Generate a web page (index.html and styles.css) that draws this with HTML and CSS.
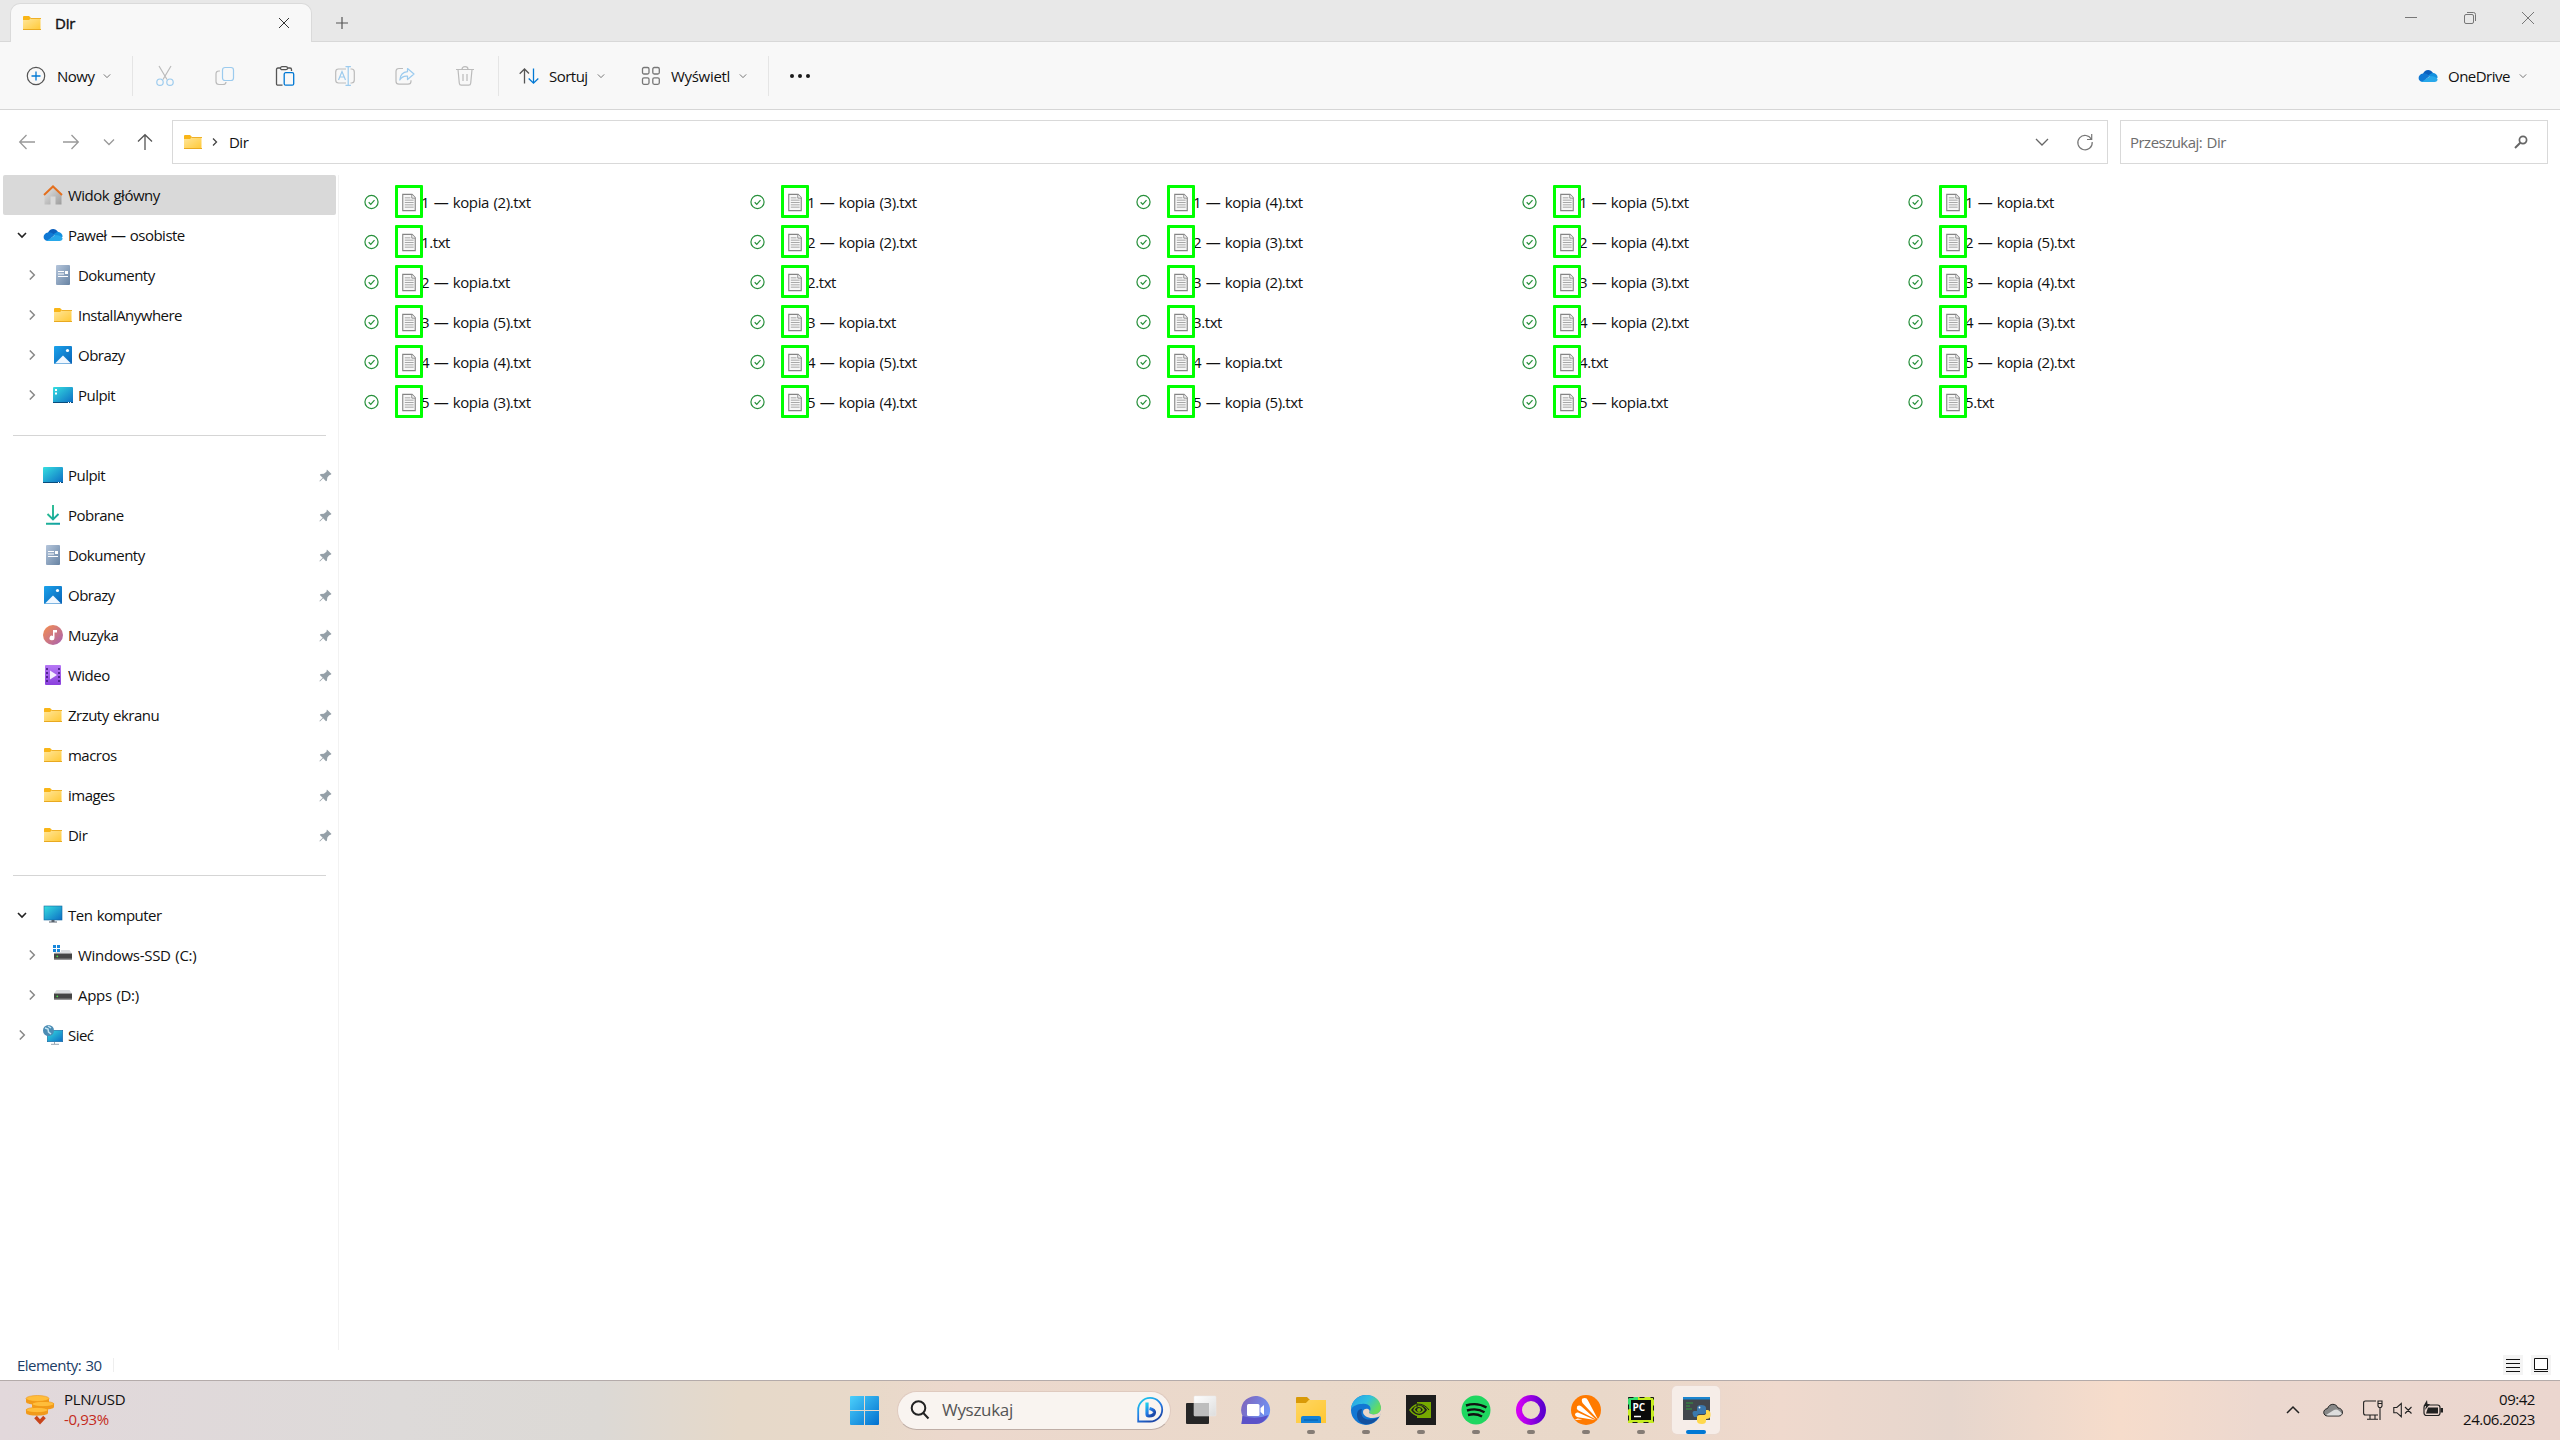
FILE: index.html
```html
<!DOCTYPE html>
<html lang="pl">
<head>
<meta charset="utf-8">
<title>Dir</title>
<link rel="stylesheet" href="styles.css">
</head>
<body>
<svg class="sprite" width="0" height="0" aria-hidden="true">
  <defs>
    <linearGradient id="gFolder" x1="0" y1="0" x2="1" y2="1"><stop offset="0" stop-color="#ffe69a"/><stop offset="1" stop-color="#ffc937"/></linearGradient>
    <linearGradient id="gScreen" x1="0" y1="0" x2="1" y2="1"><stop offset="0" stop-color="#36dfe0"/><stop offset="1" stop-color="#0c6cc4"/></linearGradient>
    <linearGradient id="gPic" x1="0" y1="0" x2="1" y2="1"><stop offset="0" stop-color="#1ba3ec"/><stop offset="1" stop-color="#0862b6"/></linearGradient>
    <linearGradient id="gDoc" x1="0" y1="0" x2="1" y2="1"><stop offset="0" stop-color="#b5c6dc"/><stop offset="1" stop-color="#6783a3"/></linearGradient>
    <linearGradient id="gMusic" x1="0" y1="0" x2="1" y2="1"><stop offset="0" stop-color="#f78f4c"/><stop offset="1" stop-color="#a660b4"/></linearGradient>
    <linearGradient id="gVideo" x1="0" y1="0" x2="0" y2="1"><stop offset="0" stop-color="#b678f5"/><stop offset="1" stop-color="#8a40dd"/></linearGradient>
    <linearGradient id="gHome" x1="0" y1="0" x2="1" y2="1"><stop offset="0" stop-color="#e6e6e6"/><stop offset="1" stop-color="#9c9c9c"/></linearGradient>
    <linearGradient id="gDown" x1="0" y1="0" x2="1" y2="1"><stop offset="0" stop-color="#2fc489"/><stop offset="1" stop-color="#0f9fa5"/></linearGradient>
    <linearGradient id="gWin" x1="0" y1="0" x2="1" y2="1"><stop offset="0" stop-color="#4cd0fb"/><stop offset="1" stop-color="#006fcf"/></linearGradient>
    <symbol id="folder" viewBox="0 0 20 20"><path d="M1 4q0-1 1-1h5l2 2-2 3H1z" fill="#f9b517"/><path d="M1 7h6l2-1.600h9.500v11H1z" fill="url(#gFolder)"/><path d="M8.500 5.500H19" stroke="#eeb028"/><path d="M1 16.500h18" stroke="#e9a91f"/></symbol>
    <symbol id="cloud" viewBox="0 0 20 20"><path d="M5 8C6.500 3 12.500 2.500 15 7l-6 5z" fill="#0a5fbd"/><path d="M4.500 16C-1 15.500-.5 8 5 7.400c2-.4 4 .3 6 2L6 16z" fill="#0f78d4"/><path d="M10 9.500l4.500-2.700c3 .2 5 2 5.200 5l-5 1z" fill="#1490df"/><path d="M3.500 16l8-5.500c3-1 8 1 8 3 0 1.500-1 2.500-3 2.500z" fill="#28a8ea"/></symbol>
    <symbol id="home" viewBox="0 0 20 20"><path d="M1.500 10L10 2l8.500 8v9.500h-6v-8h-5v8h-6z" fill="url(#gHome)"/><path d="M1 10l9-8.500L19 10" fill="none" stroke="#e4701e" stroke-width="2"/></symbol>
    <symbol id="document" viewBox="0 0 20 20"><rect x="3" width="14" height="20" rx="1" fill="url(#gDoc)"/><path d="M5 6.500h6M5 9h6M5 11.500h10" stroke="#fff" stroke-width="1.100"/><path d="M12 6h3v3h-3z" fill="#fff"/></symbol>
    <symbol id="picture" viewBox="0 0 20 20"><rect x="1" y="1" width="18" height="18" rx="1" fill="url(#gPic)"/><path d="M2 18.500l8-8 8 8z" fill="#eff7ff"/><circle cx="14.500" cy="5.500" r="1.600" fill="#fff"/></symbol>
    <symbol id="desk" viewBox="0 0 20 20"><rect y="2" width="20" height="16" rx="1" fill="url(#gScreen)"/><path d="M0 17.500h20" stroke="#094c7c"/><path d="M15 17.500h1m1 0h1" stroke="#fff"/></symbol>
    <symbol id="deskdots" viewBox="0 0 20 20"><use href="#desk"/><path d="M2 4h2v2H2zm0 3.500h2v2H2z" fill="#fff"/></symbol>
    <symbol id="download" viewBox="0 0 20 20"><path d="M10 0v14M4.500 9l5.500 5.500L15.500 9M3 18.700h14" fill="none" stroke="url(#gDown)" stroke-width="1.900"/></symbol>
    <symbol id="music" viewBox="0 0 20 20"><circle cx="10" cy="10" r="10" fill="url(#gMusic)"/><path d="M10 5h4v2.500h-2.500V13A2.500 2.300 0 1 1 10 10.900z" fill="#fff"/></symbol>
    <symbol id="video" viewBox="0 0 20 20"><rect x="2" width="16" height="20" rx="1" fill="url(#gVideo)"/><path d="M4 3v15M16 3v15" stroke="#49208a" stroke-width="1.800" stroke-dasharray="2 2"/><path d="M7 5.500v9l7-4.500z" fill="#f4edff"/></symbol>
    <symbol id="pc" viewBox="0 0 20 20"><rect x="1" y="1" width="18" height="14" fill="url(#gScreen)" stroke="#13679f" stroke-width=".6"/><path d="M8.500 15h3v1.500h2.500v1H6v-1h2.500z" fill="#56616d"/></symbol>
    <symbol id="drive" viewBox="0 0 20 20"><path d="M3.500 5h13L19 8.500H1z" fill="#dcdee0"/><path d="M1 8.500h18v6H1z" fill="#454545"/><path d="M1 14h18" stroke="#888"/><circle cx="4.300" cy="11.300" r=".9" fill="#50e04c"/></symbol>
    <symbol id="windrive" viewBox="0 0 20 20"><use href="#drive"/><path d="M-.5-1h8.500v8H-.5z" fill="#fff"/><path d="M0 0h3v3H0zm4 0h3v3H4zM0 4h3v3H0zm4 0h3v3H4z" fill="#1787dc"/></symbol>
    <symbol id="network" viewBox="0 0 20 20"><rect x="4.300" y="5.300" width="15.400" height="11.400" fill="url(#gScreen)" stroke="#1668a4" stroke-width=".6"/><path d="M11.500 17v2M8 19.300h8" stroke="#98a6b2"/><circle cx="5.500" cy="5.500" r="5.500" fill="#4b8cb4"/><path d="M2 3l3 1 .5 3L8 9M5 1l3 2" stroke="#c4e6f4" stroke-width="1.500" fill="none"/></symbol>
    <symbol id="pin" viewBox="0 0 14 14"><path d="M8.500.5l5 5-1.500 1-1 .1-2 2.500-.5 3.500-1 .6-3-3.200L1 13.500l-.6-.6L4 9.300.9 6.500l.8-1 3.500-.3L8 3z" fill="#95a0a8"/></symbol>
    <symbol id="chev" viewBox="0 0 10 10"><path d="M1 3l4 4 4-4" fill="none" stroke="currentColor" stroke-width="var(--w,1)"/></symbol>
    <symbol id="chevr" viewBox="0 0 10 10"><path d="M2.800.5L7.300 5 2.800 9.500" fill="none" stroke="currentColor" stroke-width="var(--w,1.500)"/></symbol>
    <symbol id="ok" viewBox="0 0 16 16"><circle cx="8" cy="8" r="7" fill="#fff" stroke="#27903b" stroke-width="1.300"/><path d="M5 8.300l2.200 2.200L11.200 6" fill="none" stroke="#27903b" stroke-width="1.300"/></symbol>
    <symbol id="txt" viewBox="0 0 15 19"><path d="M.8.8h10l3.400 3.700v13.700H.8z" fill="#f7f7f7" stroke="#858585" stroke-width="1.200"/><path d="M10.500 1v3.800h3.700" fill="#fff" stroke="#858585"/><path d="M3 4.500h6M3 7h9.500M3 9.500h9.500M3 12h9.500M3 14.500h9.500" stroke="#a0a0a0"/></symbol>
  </defs>
</svg>

<header class="titlebar">
  <div class="tab"><svg class="i20"><use href="#folder"/></svg><span class="tab-name">Dir</span><svg class="tab-close" viewBox="0 0 12 12"><path d="M1 1l10 10M11 1L1 11" stroke="#333"/></svg></div>
  <svg class="tab-new" viewBox="0 0 12 12"><path d="M6 0v12M0 6h12" stroke="#555" stroke-width="1.200"/></svg>
  <div class="win-buttons">
    <svg viewBox="0 0 12 12"><path d="M0 5.500h12" stroke="#777"/></svg>
    <svg viewBox="0 0 12 12" fill="none" stroke="#777"><rect x=".5" y="2.500" width="9" height="9" rx="1.500"/><path d="M3 .5h6.500q2 0 2 2V9"/></svg>
    <svg viewBox="0 0 12 12"><path d="M0 0l12 12M12 0L0 12" stroke="#777"/></svg>
  </div>
</header>

<nav class="toolbar">
  <div class="tool new"><svg class="i20" viewBox="0 0 20 20" fill="none"><circle cx="10" cy="10" r="8.700" stroke="#555" stroke-width="1.200"/><path d="M10 5.500v9M5.500 10h9" stroke="#0078d4" stroke-width="1.300"/></svg><span>Nowy</span><svg class="i8"><use href="#chev"/></svg></div>
  <div class="divider"></div>
  <div class="icons">
    <svg class="i20" viewBox="0 0 20 20" fill="none" stroke-width="1.200"><path d="M4 0l8 13.500M16 0L8 13.500" stroke="#bbb"/><circle cx="5" cy="16.200" r="3.200" stroke="#9ccbee"/><circle cx="15" cy="16.200" r="3.200" stroke="#9ccbee"/></svg>
    <svg class="i20" viewBox="0 0 20 20" fill="none" stroke-width="1.200"><path d="M5 5H4Q1 5 1 8v7.500q0 3 3 3h4q3 0 3-2.500" stroke="#bbb"/><rect x="7.500" y="1.500" width="11" height="13" rx="2.500" stroke="#9ccbee"/></svg>
    <svg class="i20" viewBox="0 0 20 20" fill="none" stroke-width="1.300"><path d="M7.500 19.200H3q-1.500 0-1.500-1.500V3.500Q1.500 2 3 2h2.500M12.500 2H15q1.500 0 1.500 1.500V5" stroke="#555"/><rect x="5.500" y=".7" width="7" height="3" rx="1.500" stroke="#555"/><rect x="9.200" y="6.700" width="9.500" height="12.500" rx="1.500" stroke="#0078d4"/></svg>
    <svg class="i20" viewBox="0 0 20 20" fill="none" stroke-width="1.200"><path d="M11 3H3.500Q.7 3 .7 6v8q0 3 2.800 3H11M15.500 3h1q2.800 0 2.800 3v8q0 3-2.800 3h-1" stroke="#bbb"/><path d="M3.500 14L7 5.500l3.500 8.500M4.700 11h4.600M13.200 1v18M10.500.7h5.400M10.500 19.300h5.400" stroke="#9ccbee"/></svg>
    <svg class="i20" viewBox="0 0 20 20" fill="none" stroke-width="1.200"><path d="M8 2.500H4Q1 2.500 1 5.500v9.700q0 3 3 3h9q3 0 3-3v-1" stroke="#bbb"/><path d="M12.500 2.500L19 8l-6.500 5.500v-3.300Q7.500 9.500 4.800 14 5.500 6.300 12.500 5.700z" stroke="#9ccbee" stroke-linejoin="round"/></svg>
    <svg class="i20" viewBox="0 0 20 20" fill="none" stroke="#bbb" stroke-width="1.200"><path d="M1 3.500h18M3 3.500l1.300 13.700q.2 2 2 2h7.400q1.800 0 2-2L17 3.500M7 3.300q0-2.600 3-2.600t3 2.600M8 8v7M12 8v7"/></svg>
  </div>
  <div class="divider"></div>
  <div class="tool sort"><svg class="i20" viewBox="0 0 20 20" fill="none" stroke-width="1.300"><path d="M5.500 17.500V3M.7 7.700L5.500 3 10 7.500" stroke="#555"/><path d="M14.500 2.500V17M9.700 12.500l4.800 4.700 4.800-4.700" stroke="#0078d4"/></svg><span>Sortuj</span><svg class="i8"><use href="#chev"/></svg></div>
  <div class="tool view"><svg class="i20" viewBox="0 0 20 20" fill="none" stroke="#777" stroke-width="1.300"><rect x="1.500" y="1.500" width="6.500" height="6.500" rx="1.500"/><rect x="11.800" y="1.500" width="6.500" height="6.500" rx="1.500"/><rect x="1.500" y="11.800" width="6.500" height="6.500" rx="1.500"/><rect x="11.800" y="11.800" width="6.500" height="6.500" rx="1.500"/></svg><span>Wyświetl</span><svg class="i8"><use href="#chev"/></svg></div>
  <div class="divider"></div>
  <svg class="more" viewBox="0 0 20 6" fill="#1b1b1b"><circle cx="2" cy="3" r="2"/><circle cx="10" cy="3" r="2"/><circle cx="18" cy="3" r="2"/></svg>
  <div class="tool onedrive"><svg class="i20"><use href="#cloud"/></svg><span>OneDrive</span><svg class="i8"><use href="#chev"/></svg></div>
</nav>

<div class="location">
  <div class="arrows">
    <svg viewBox="0 0 16 16" stroke="#999"><path d="M16 8H1M7.500 1L.7 8l6.800 7"/></svg>
    <svg viewBox="0 0 16 16" stroke="#999"><path d="M0 8h15M8.500 1l6.800 7-6.800 7"/></svg>
    <svg viewBox="0 0 16 16" stroke="#999"><path d="M3 5.500l5 5 5-5"/></svg>
    <svg viewBox="0 0 16 16" stroke="#555"><path d="M8 16V1M1 7.500L8 .7l7 6.800"/></svg>
  </div>
  <div class="address"><svg class="i20"><use href="#folder"/></svg><svg class="crumb" viewBox="0 0 8 8"><path d="M2 .5L5.500 4 2 7.500" fill="none" stroke="#444" stroke-width="1.300"/></svg><span>Dir</span>
    <svg class="expand" viewBox="0 0 14 14" fill="none" stroke="#666" stroke-width="1.300"><path d="M1 4l6 6 6-6"/></svg>
    <svg class="reload" viewBox="0 0 16 16" fill="none" stroke="#777" stroke-width="1.200"><path d="M14.500 5.500A7.200 7.200 0 1 0 15.200 8M14.700 0v5.500H10"/></svg></div>
  <div class="search"><span>Przeszukaj: Dir</span><svg viewBox="0 0 14 14" fill="none" stroke="#666"><circle cx="9" cy="5" r="3.600" stroke-width="1.700"/><path d="M6.300 7.800L1 13" stroke-width="2"/></svg></div>
</div>

<div class="content">
  <aside class="sidebar">
    <div class="row selected"><i></i><svg class="i20"><use href="#home"/></svg>Widok główny</div>
    <div class="row open"><svg class="tw"><use href="#chev"/></svg><svg class="i20"><use href="#cloud"/></svg>Paweł — osobiste</div>
    <div class="row sub"><svg class="tw"><use href="#chevr"/></svg><svg class="i20"><use href="#document"/></svg>Dokumenty</div>
    <div class="row sub"><svg class="tw"><use href="#chevr"/></svg><svg class="i20"><use href="#folder"/></svg>InstallAnywhere</div>
    <div class="row sub"><svg class="tw"><use href="#chevr"/></svg><svg class="i20"><use href="#picture"/></svg>Obrazy</div>
    <div class="row sub"><svg class="tw"><use href="#chevr"/></svg><svg class="i20"><use href="#deskdots"/></svg>Pulpit</div>
    <hr>
    <div class="row"><i></i><svg class="i20"><use href="#desk"/></svg>Pulpit<svg class="pin"><use href="#pin"/></svg></div>
    <div class="row"><i></i><svg class="i20"><use href="#download"/></svg>Pobrane<svg class="pin"><use href="#pin"/></svg></div>
    <div class="row"><i></i><svg class="i20"><use href="#document"/></svg>Dokumenty<svg class="pin"><use href="#pin"/></svg></div>
    <div class="row"><i></i><svg class="i20"><use href="#picture"/></svg>Obrazy<svg class="pin"><use href="#pin"/></svg></div>
    <div class="row"><i></i><svg class="i20"><use href="#music"/></svg>Muzyka<svg class="pin"><use href="#pin"/></svg></div>
    <div class="row"><i></i><svg class="i20"><use href="#video"/></svg>Wideo<svg class="pin"><use href="#pin"/></svg></div>
    <div class="row"><i></i><svg class="i20"><use href="#folder"/></svg>Zrzuty ekranu<svg class="pin"><use href="#pin"/></svg></div>
    <div class="row"><i></i><svg class="i20"><use href="#folder"/></svg>macros<svg class="pin"><use href="#pin"/></svg></div>
    <div class="row"><i></i><svg class="i20"><use href="#folder"/></svg>images<svg class="pin"><use href="#pin"/></svg></div>
    <div class="row"><i></i><svg class="i20"><use href="#folder"/></svg>Dir<svg class="pin"><use href="#pin"/></svg></div>
    <hr>
    <div class="row open"><svg class="tw"><use href="#chev"/></svg><svg class="i20"><use href="#pc"/></svg>Ten komputer</div>
    <div class="row sub wide"><svg class="tw"><use href="#chevr"/></svg><svg class="i20"><use href="#windrive"/></svg>Windows-SSD (C:)</div>
    <div class="row sub wide"><svg class="tw"><use href="#chevr"/></svg><svg class="i20"><use href="#drive"/></svg>Apps (D:)</div>
    <div class="row"><svg class="tw"><use href="#chevr"/></svg><svg class="i20"><use href="#network"/></svg>Sieć</div>
  </aside>

  <main class="files">
    <div class="file"><svg class="ok"><use href="#ok"/></svg><b><svg><use href="#txt"/></svg></b><span>1 — kopia (2).txt</span></div>
    <div class="file"><svg class="ok"><use href="#ok"/></svg><b><svg><use href="#txt"/></svg></b><span>1 — kopia (3).txt</span></div>
    <div class="file"><svg class="ok"><use href="#ok"/></svg><b><svg><use href="#txt"/></svg></b><span>1 — kopia (4).txt</span></div>
    <div class="file"><svg class="ok"><use href="#ok"/></svg><b><svg><use href="#txt"/></svg></b><span>1 — kopia (5).txt</span></div>
    <div class="file"><svg class="ok"><use href="#ok"/></svg><b><svg><use href="#txt"/></svg></b><span>1 — kopia.txt</span></div>
    <div class="file"><svg class="ok"><use href="#ok"/></svg><b><svg><use href="#txt"/></svg></b><span>1.txt</span></div>
    <div class="file"><svg class="ok"><use href="#ok"/></svg><b><svg><use href="#txt"/></svg></b><span>2 — kopia (2).txt</span></div>
    <div class="file"><svg class="ok"><use href="#ok"/></svg><b><svg><use href="#txt"/></svg></b><span>2 — kopia (3).txt</span></div>
    <div class="file"><svg class="ok"><use href="#ok"/></svg><b><svg><use href="#txt"/></svg></b><span>2 — kopia (4).txt</span></div>
    <div class="file"><svg class="ok"><use href="#ok"/></svg><b><svg><use href="#txt"/></svg></b><span>2 — kopia (5).txt</span></div>
    <div class="file"><svg class="ok"><use href="#ok"/></svg><b><svg><use href="#txt"/></svg></b><span>2 — kopia.txt</span></div>
    <div class="file"><svg class="ok"><use href="#ok"/></svg><b><svg><use href="#txt"/></svg></b><span>2.txt</span></div>
    <div class="file"><svg class="ok"><use href="#ok"/></svg><b><svg><use href="#txt"/></svg></b><span>3 — kopia (2).txt</span></div>
    <div class="file"><svg class="ok"><use href="#ok"/></svg><b><svg><use href="#txt"/></svg></b><span>3 — kopia (3).txt</span></div>
    <div class="file"><svg class="ok"><use href="#ok"/></svg><b><svg><use href="#txt"/></svg></b><span>3 — kopia (4).txt</span></div>
    <div class="file"><svg class="ok"><use href="#ok"/></svg><b><svg><use href="#txt"/></svg></b><span>3 — kopia (5).txt</span></div>
    <div class="file"><svg class="ok"><use href="#ok"/></svg><b><svg><use href="#txt"/></svg></b><span>3 — kopia.txt</span></div>
    <div class="file"><svg class="ok"><use href="#ok"/></svg><b><svg><use href="#txt"/></svg></b><span>3.txt</span></div>
    <div class="file"><svg class="ok"><use href="#ok"/></svg><b><svg><use href="#txt"/></svg></b><span>4 — kopia (2).txt</span></div>
    <div class="file"><svg class="ok"><use href="#ok"/></svg><b><svg><use href="#txt"/></svg></b><span>4 — kopia (3).txt</span></div>
    <div class="file"><svg class="ok"><use href="#ok"/></svg><b><svg><use href="#txt"/></svg></b><span>4 — kopia (4).txt</span></div>
    <div class="file"><svg class="ok"><use href="#ok"/></svg><b><svg><use href="#txt"/></svg></b><span>4 — kopia (5).txt</span></div>
    <div class="file"><svg class="ok"><use href="#ok"/></svg><b><svg><use href="#txt"/></svg></b><span>4 — kopia.txt</span></div>
    <div class="file"><svg class="ok"><use href="#ok"/></svg><b><svg><use href="#txt"/></svg></b><span>4.txt</span></div>
    <div class="file"><svg class="ok"><use href="#ok"/></svg><b><svg><use href="#txt"/></svg></b><span>5 — kopia (2).txt</span></div>
    <div class="file"><svg class="ok"><use href="#ok"/></svg><b><svg><use href="#txt"/></svg></b><span>5 — kopia (3).txt</span></div>
    <div class="file"><svg class="ok"><use href="#ok"/></svg><b><svg><use href="#txt"/></svg></b><span>5 — kopia (4).txt</span></div>
    <div class="file"><svg class="ok"><use href="#ok"/></svg><b><svg><use href="#txt"/></svg></b><span>5 — kopia (5).txt</span></div>
    <div class="file"><svg class="ok"><use href="#ok"/></svg><b><svg><use href="#txt"/></svg></b><span>5 — kopia.txt</span></div>
    <div class="file"><svg class="ok"><use href="#ok"/></svg><b><svg><use href="#txt"/></svg></b><span>5.txt</span></div>
  </main>
</div>

<footer class="status">
  <span class="count">Elementy: 30</span>
  <div class="modes">
    <svg viewBox="0 0 20 20"><path d="M3 4.500h14M3 8.500h14M3 12.500h14M3 16.500h14" stroke="#111"/></svg>
    <svg viewBox="0 0 20 20"><path d="M3.500 3.500h13v11h-13z" fill="#fff" stroke="#111"/><path d="M3 16.500h14" stroke="#111"/></svg>
  </div>
</footer>

<div class="taskbar">
  <div class="widget">
    <svg width="28" height="30" viewBox="0 0 28 30"><g fill="#f19a1c"><path d="M0 14.500v3.500c0 3.500 22 3.500 22 0v-3.500z"/><path d="M6 8.500V12c0 3.500 22 3.500 22 0V8.500z"/><path d="M0 3.500V7c0 3.500 23 3.500 23 0V3.500z"/></g><g fill="#ffbd3b" stroke="#ee930f" stroke-width=".6"><ellipse cx="11" cy="15" rx="11" ry="2.600"/><ellipse cx="17" cy="9" rx="11" ry="2.600"/><ellipse cx="11.500" cy="3.500" rx="11.500" ry="3"/></g><path d="M9.500 22l4.500 5 4.500-5" fill="none" stroke="#c8441b" stroke-width="3.500"/></svg>
    <div class="rate"><span>PLN/USD</span><span class="drop">-0,93%</span></div>
  </div>
  <div class="apps">
    <svg class="start" viewBox="0 0 29 29" fill="url(#gWin)"><path d="M0 1q0-1 1-1h13v14H0zM15 0h13q1 0 1 1v13H15zM0 15h14v14H1q-1 0-1-1zM15 15h14v13q0 1-1 1H15z"/></svg>
    <div class="find"><svg width="20" height="20" viewBox="0 0 20 20" fill="none" stroke="#222" stroke-width="2"><circle cx="8.500" cy="8" r="6.800"/><path d="M13.300 13l5.200 5.500"/></svg><span>Wyszukaj</span>
      <svg width="26" height="26" viewBox="0 0 26 26" fill="none"><defs><linearGradient id="gBing" x1="0" y1="0" x2=".6" y2="1"><stop offset="0" stop-color="#1bd5ee"/><stop offset=".6" stop-color="#2479e4"/><stop offset="1" stop-color="#1c48a8"/></linearGradient></defs><path d="M1.200 24.500V13A12 11.800 0 1 1 13 24.500z" stroke="url(#gBing)" stroke-width="1.800"/><path d="M10 5.500v11.500q0 2 2 2 5 0 5.500-3.500.3-2.500-5-4" stroke="url(#gBing)" stroke-width="3.200"/></svg></div>
    <div class="app"><svg viewBox="0 0 30 30"><defs><linearGradient id="gTask" x1="0" y1="0" x2="1" y2="1"><stop offset="0" stop-color="#fff"/><stop offset="1" stop-color="#ddd"/></linearGradient></defs><rect y="8" width="23" height="21" rx="1" fill="#262626"/><rect x="8" y="1" width="22" height="20" rx="1" fill="url(#gTask)" stroke="#e8e8e8" stroke-width=".5"/><path d="M8 8h15v13H8z" fill="#bdbdbd"/></svg></div>
    <div class="app"><svg viewBox="0 0 30 30"><defs><linearGradient id="gChat" x1="0" y1="0" x2="1" y2=".5"><stop offset="0" stop-color="#8060b8"/><stop offset="1" stop-color="#7094f4"/></linearGradient></defs><path d="M.5 29l1-8A14.500 14 0 1 1 15 29z" fill="url(#gChat)"/><path d="M.5 29l1-8q14 4 26-1Q23 29 15 29z" fill="#5b52c8"/><rect x="6" y="9" width="12.500" height="12" rx="1.500" fill="#fff"/><path d="M19.500 13l3.500-3v10l-3.500-3z" fill="#fff"/></svg></div>
    <div class="app run"><svg viewBox="0 0 30 30"><path d="M0 3q0-1 1-1h10l3 3-3 5H0z" fill="#d99a07"/><path d="M0 8h10l3-3h17v23H0z" fill="url(#gFolder)"/><path d="M0 8h10l3-3h17v23H0z" fill="#ffc62b" opacity=".5"/><path d="M5 28v-5q0-2 2-2h16q2 0 2 2v5z" fill="#1381d8"/><path d="M8 25h14" stroke="#075aa5"/></svg></div>
    <div class="app run"><svg viewBox="0 0 30 30"><defs><linearGradient id="gEdge" x1="0" y1="0" x2="1" y2=".5"><stop offset="0" stop-color="#279ee8"/><stop offset=".55" stop-color="#2fc0df"/><stop offset="1" stop-color="#67dd59"/></linearGradient></defs><circle cx="15" cy="15" r="15" fill="#1277d3"/><path d="M0 14C1-4 29-5 30 13c0 6-8 8-12 5 4-5 0-10-7-9-5 0-9 2-11 5z" fill="url(#gEdge)"/><path d="M11 14c-3 9 5 14 17 8-7 11-22 9-22-2 0-4 2-6 5-6z" fill="#13519f"/><path d="M18 18c4 3 12 1 12-5 1 6-1 9-3 9-8 3-15-1-15-5 0-5 9-4 6 1z" fill="#ead7c9"/></svg></div>
    <div class="app run"><svg viewBox="0 0 30 30"><path d="M0 0h30v30H0z" fill="#1d1d1d"/><path d="M11 7h14v16H11z" fill="#76a900"/><path d="M4 15c6-8 14-7 18 0-5 8-13 7-18 0z" fill="#1d1d1d" stroke="#76a900" stroke-width="1.500"/><path d="M8 15c2-5 7-5 10 0-3 4-7 4-10 0z" fill="none" stroke="#76a900" stroke-width="1.500"/><circle cx="13" cy="15" r="2" fill="#76a900"/><path d="M11 12V9q8 0 12 6" fill="none" stroke="#1d1d1d"/></svg></div>
    <div class="app run"><svg viewBox="0 0 30 30"><circle cx="15" cy="15" r="14.500" fill="#1fd760"/><path d="M5 10.500q11-3.500 20.500 2M6 15.500q10-3 17.500 1.700M7 20q8-2 14 1.500" fill="none" stroke="#111" stroke-width="2.400"/></svg></div>
    <div class="app run"><svg viewBox="0 0 30 30"><defs><linearGradient id="gOpera"><stop offset="0" stop-color="#d300f4"/><stop offset="1" stop-color="#5c00cf"/></linearGradient></defs><circle cx="15" cy="15" r="12" fill="none" stroke="url(#gOpera)" stroke-width="6"/></svg></div>
    <div class="app run"><svg viewBox="0 0 30 30"><circle cx="15" cy="15" r="15" fill="#ff7a00"/><path d="M11.500 3.500q4-1.500 5.500 2L27 24.500 11.500 8q-1.500-3 0-4.500zM6 11.500q2-2 4.500 0L25 24.500 7.500 15.500Q5 13.500 6 11.500zM4 19q1-2 3-1.500l17 7.500-17-2.700Q4 21.500 4 19z" fill="#fff"/><path d="M3.500 25l3-1.500 5 1z" fill="#fff"/></svg></div>
    <div class="app run"><svg viewBox="0 0 30 30"><path d="M2 2h26v26H2z" fill="#c6ec22"/><path d="M2 2h10v12H2z" fill="#36e06e"/><path d="M2.500 2.500h25v25h-25z" fill="none" stroke="#171717" stroke-dasharray="5 6"/><path d="M5 5h20v20H5z" fill="#0a0a0a"/><text x="6.500" y="15.500" class="pc-label">PC</text><path d="M8 21.500h7" stroke="#fff" stroke-width="1.500"/></svg></div>
    <div class="app run active"><svg viewBox="0 0 30 30"><path d="M2 2h27v23H2z" fill="#42474d"/><path d="M2 2h27v2.500H2z" fill="#1b85cf"/><path d="M5 8h7M5 11h4M5 14h6" stroke="#388043" stroke-width="1.300"/><path d="M16 17v-4q0-3 4-3 5 0 5 3v4q0 2-3 2h-4q-2 0-2 3h-3q-3-5 0-6h8" fill="#3a78ad"/><path d="M25 15h2q3 1 2.500 6-.5 3-4.500 3v2q0 3-4 3-5 0-5-3v-4q0-2 3-2h3q3 0 3-2z" fill="#ffd84c"/><circle cx="18.500" cy="12.500" r=".9" fill="#fff"/></svg></div>
  </div>
  <div class="tray">
    <svg class="caret" viewBox="0 0 14 8" fill="none" stroke="#222" stroke-width="1.500"><path d="M1 7l6-6 6 6"/></svg>
    <svg viewBox="0 0 20 20" stroke="#222"><path d="M4.500 16C0 16-1 9.500 4.500 8.500 6.500 3 13 3 15 8c6 .5 5.500 8 1 8z" fill="#888"/><path d="M3 15l8-5q4-2 8 4l-3 1.500H5z" fill="#ddd" stroke="none"/></svg>
    <svg class="net" viewBox="0 0 20 20" fill="none" stroke="#222" stroke-width="1.100"><path d="M13 1H2.500Q.6 1 .6 3v10q0 2 1.900 2H15M7 15v4M12 15v4M4 19.300h11M15 1h4v5l-1 1.500h-2L15 6zM17 7.500V20M15 3.500h4"/></svg>
    <svg class="vol" viewBox="0 0 20 20" fill="none" stroke="#222" stroke-width="1.100"><path d="M.8 7.500h3L8.300 3.500v13.200l-4.500-4h-3zM12 7l6.500 6.500M18.500 7L12 13.500"/></svg>
    <svg viewBox="0 0 20 20" fill="none"><rect x="1" y="5" width="16" height="10.500" rx="2.500" stroke="#222" stroke-width="1.200"/><path d="M3 13.500l2-6h10v6zM17.500 8H20v4.500h-2.500zM4 0L.5 6H3L2 10l5-6H4.500z" fill="#222"/></svg>
    <div class="clock"><span>09:42</span><span>24.06.2023</span></div>
  </div>
</div>
</body>
</html>
```
FILE: styles.css
```css
* { box-sizing: border-box; }

body {
  margin: 0;
  width: 2560px;
  height: 1440px;
  display: flex;
  flex-direction: column;
  overflow: hidden;
  background: #fff;
  color: #111;
  font: 15px/20px "Open Sans", "Noto Sans", sans-serif;
  letter-spacing: -0.52px;
  word-spacing: 1px;
}

svg { display: block; flex: none; overflow: visible; }
.sprite { position: absolute; }
.i20 { width: 20px; height: 20px; }
.i8 { width: 8px; height: 8px; color: #555; }

/* Tabs */
.titlebar {
  height: 42px;
  flex: none;
  display: flex;
  padding-left: 10px;
  background: #e8e8e8;
  border-bottom: 1px solid #d8d8d8;
}
.tab {
  width: 302px;
  height: 39px;
  margin-top: 3px;
  padding: 0 21px 0 11px;
  display: flex;
  align-items: center;
  background: #f8f8f8;
  border: 1px solid #dadada;
  border-bottom: 0;
  border-radius: 10px 10px 0 0;
}
.tab-name { margin: -1px 0 0 13px; -webkit-text-stroke: 0.4px #111; letter-spacing: -0.2px; }
.tab-close { width: 12px; height: 12px; margin-left: auto; }
.tab-new { width: 12px; height: 12px; margin: 17px 0 0 24px; }
.win-buttons { margin: 12px 26px 0 auto; display: flex; gap: 46.500px; }
.win-buttons svg { width: 12px; height: 12px; }

/* Command bar */
.toolbar {
  height: 68px;
  flex: none;
  display: flex;
  align-items: center;
  background: #f8f8f8;
  border-bottom: 1px solid #d6d6d6;
}
.tool { display: flex; align-items: center; }
.tool span { padding-top: 1px; }
.tool .i8 { margin-left: auto; }
.new { width: 132px; padding: 0 21px 0 26px; }
.new span { margin-left: 11px; }
.divider { width: 1px; height: 40px; background: #e5e5e5; }
.icons { width: 365px; padding-left: 22px; display: flex; gap: 40px; }
.sort { width: 86px; margin-left: 20px; }
.sort span, .view span { margin-left: 10px; }
.view { width: 106px; margin-left: 36px; letter-spacing: -0.3px; }
.view + .divider { margin-left: 21px; }
.more { width: 20px; height: 6px; margin-left: 21px; }
.onedrive { width: 109px; margin: 0 33px 0 auto; }
.onedrive span { margin-left: 10px; }

/* Location row */
.location { height: 65px; flex: none; display: flex; align-items: center; padding-bottom: 1px; }
.arrows { width: 172px; padding-left: 19px; display: flex; align-items: center; }
.arrows svg { width: 16px; height: 16px; margin-right: 28px; fill: none; stroke-width: 1.300; }
.arrows svg:nth-child(2) { margin-right: 22px; }
.arrows svg:nth-child(3) { margin-right: 20px; }
.address { width: 1936px; height: 44px; padding: 0 14px 0 10px; display: flex; align-items: center; border: 1px solid #d9d9d9; }
.address span { padding-bottom: 1px; }
.crumb { width: 8px; height: 8px; margin: 0 10px 0 8px; }
.expand { width: 14px; height: 14px; margin-left: auto; }
.reload { width: 16px; height: 16px; margin-left: 28px; }
.search { width: 428px; height: 44px; margin-left: 12px; padding: 0 19px 0 9px; display: flex; align-items: center; justify-content: space-between; border: 1px solid #d9d9d9; color: #6d6d6d; }
.search svg { width: 14px; height: 14px; }

/* Navigation tree */
.content { flex: 1; display: flex; min-height: 0; }
.sidebar { width: 339px; padding-left: 3px; border-right: 1px solid #f2f2f2; }
.row { width: 333px; height: 40px; padding-left: 14px; display: flex; align-items: center; border-radius: 2px; }
.row.selected { background: #d9d9d9; }
.row i, .tw { width: 10px; height: 10px; margin-right: 16px; color: #888; }
.row .i20 { margin-right: 5px; }
.row.sub { padding-left: 24px; }
.wide { letter-spacing: -0.3px; }
.open .tw { color: #222; --w: 1.600; }
.sidebar hr { height: 1px; margin: 20px 12px 19px 10px; border: 0; background: #d5d5d5; }
.row .pin { width: 13px; height: 13px; margin: 0 4px 0 auto; }

/* File list */
.files { padding: 7px 0 0 25px; display: grid; grid-template-columns: repeat(5, 386px); grid-auto-rows: 40px; letter-spacing: -0.4px; }
.file { display: flex; align-items: center; }
.ok { width: 15px; height: 16px; margin-right: 16px; }
.file b { z-index: 1; width: 28px; height: 33px; padding: 5px 0 0 4px; border: 3px solid #00ff00; border-radius: 1px; margin-top: -1px; }
.file b svg { width: 14px; height: 19px; }
.file span { margin-left: -2px; }

/* Status bar */
.status { height: 30px; flex: none; display: flex; align-items: center; justify-content: space-between; padding: 0 9px 0 17px; color: #1c3d66; }
.count { width: 97px; border-right: 1px solid #eee; line-height: 14px; }
.modes { display: flex; gap: 8px; }
.modes svg { width: 20px; height: 20px; background: #f4f4f4; }

/* Taskbar */
.taskbar {
  height: 60px;
  flex: none;
  display: grid;
  grid-template-columns: 850px 1fr auto;
  border-top: 1px solid #b4abaa;
  background: linear-gradient(90deg, #e2d8db 0, #dddad9 400px, #dcd9d5 600px, #e6d9c9 740px, #e8d9c9 870px, #ecd8cd 960px, #ead9ca 1300px, #e9d8c9 1600px, #efd9cd 1780px, #e6d6cd 1950px, #f6dccb 2120px, #ecd8cf 2260px, #ebd6cf 100%);
}
.widget { display: flex; padding: 14px 0 0 26px; }
.rate, .clock { display: flex; flex-direction: column; margin-top: -6px; }
.rate { margin-left: 10px; letter-spacing: -0.35px; }
.drop { color: #c42b1c; }
.apps { display: flex; align-items: center; padding-bottom: 1px; }
.start { width: 29px; height: 29px; }
.find {
  width: 274px;
  height: 39px;
  margin: 0 4px 0 18px;
  padding: 0 7px 0 12px;
  display: flex;
  align-items: center;
  background: #f9f4f0;
  border: 1px solid #dfcabf;
  border-bottom-color: #bfaea6;
  border-radius: 20px;
}
.find span { margin: 0 auto 0 12px; color: #555; font-size: 17px; letter-spacing: -0.3px; }
.app { width: 48px; height: 48px; margin-right: 7px; padding-top: 9px; display: flex; flex-direction: column; align-items: center; border-radius: 5px; }
.app svg { width: 30px; height: 30px; }
.find + .app { margin-left: 2px; }
.run::after { content: ""; width: 8px; height: 4px; margin-top: 5px; border-radius: 2px; background: #857c75; }
.active { background: #f6ede8; box-shadow: 0 0 0 1px #ead8ce; }
.active::after { width: 20px; background: #0078d4; }
.pc-label { font: bold 10px "Open Sans", sans-serif; fill: #fff; letter-spacing: 0; }
.tray { display: flex; padding: 0 25px 1px 0; align-items: center; }
.tray svg { width: 20px; height: 20px; }
.tray .caret { width: 14px; height: 8px; margin-right: 23px; }
.tray .net { margin-left: 20px; }
.tray .vol { margin: 0 10px; }
.clock { width: 92px; text-align: right; margin-top: -2px; letter-spacing: -0.45px; }
```
